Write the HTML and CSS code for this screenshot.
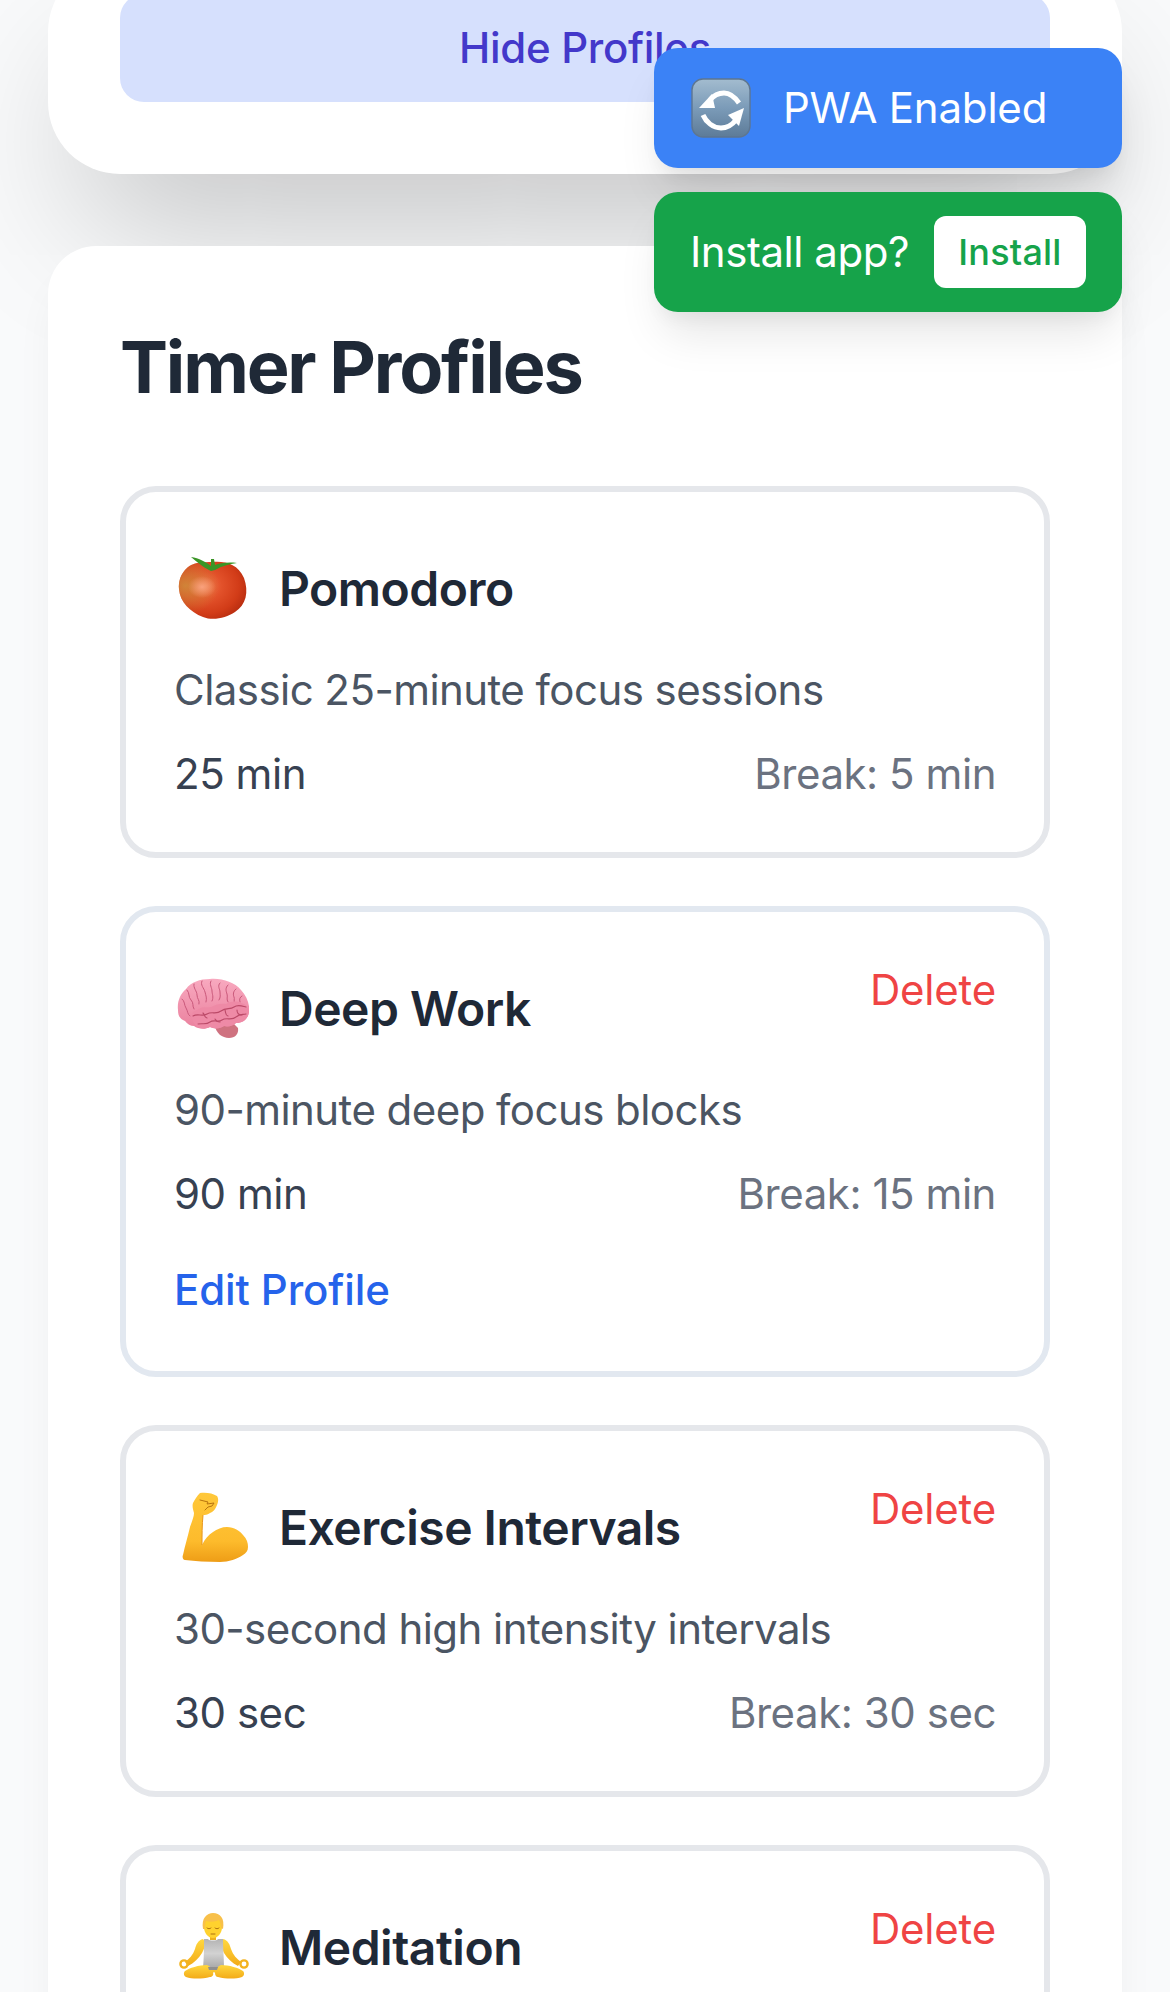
FILE: index.html
```html
<!DOCTYPE html>
<html lang="en">
<head>
<meta charset="utf-8">
<title>Timer Profiles</title>
<link rel="stylesheet" href="styles.css">
</head>
<body>
<svg class="defs" width="0" height="0" aria-hidden="true">
  <defs>
    <radialGradient id="tomatoBody" cx="0.4" cy="0.42" r="0.68">
      <stop offset="0" stop-color="#f2724a"/>
      <stop offset="0.35" stop-color="#e2512a"/>
      <stop offset="0.72" stop-color="#d23c18"/>
      <stop offset="1" stop-color="#b32a0e"/>
    </radialGradient>
    <radialGradient id="tomatoSide" cx="0.1" cy="0.42" r="0.5">
      <stop offset="0" stop-color="#cf8a3a" stop-opacity="0.9"/>
      <stop offset="1" stop-color="#cf8a3a" stop-opacity="0"/>
    </radialGradient>
    <radialGradient id="tomatoGlow" cx="0.5" cy="0.5" r="0.5">
      <stop offset="0" stop-color="#ffa888" stop-opacity="0.85"/>
      <stop offset="1" stop-color="#ffa888" stop-opacity="0"/>
    </radialGradient>
    <linearGradient id="brainBody" x1="0" y1="0" x2="0" y2="1">
      <stop offset="0" stop-color="#f8a9bf"/>
      <stop offset="1" stop-color="#ea819e"/>
    </linearGradient>
    <linearGradient id="armBody" x1="0" y1="0" x2="0" y2="1">
      <stop offset="0" stop-color="#ffc83a"/>
      <stop offset="0.7" stop-color="#fdbb2c"/>
      <stop offset="1" stop-color="#ee9d16"/>
    </linearGradient>
    <linearGradient id="skinBody" x1="0" y1="0" x2="0" y2="1">
      <stop offset="0" stop-color="#ffd83f"/>
      <stop offset="1" stop-color="#f3ab18"/>
    </linearGradient>
    <linearGradient id="vest" x1="0" y1="0" x2="0" y2="1">
      <stop offset="0" stop-color="#b4b4b4"/>
      <stop offset="0.5" stop-color="#d2d2d2"/>
      <stop offset="1" stop-color="#a8a8a8"/>
    </linearGradient>
    <linearGradient id="syncBg" x1="0" y1="0" x2="0" y2="1">
      <stop offset="0" stop-color="#a3bccf"/>
      <stop offset="0.5" stop-color="#7b9bb8"/>
      <stop offset="1" stop-color="#5d7b98"/>
    </linearGradient>
  </defs>
</svg>

<div class="page">
  <section class="panel panel-top">
    <button class="hide-btn">Hide Profiles</button>
  </section>

  <section class="panel panel-profiles">
    <h2 class="panel-title">Timer Profiles</h2>
    <div class="profile-list">

      <article class="profile">
        <header class="profile-head">
          <div class="profile-name">
            <svg class="emoji" viewBox="0 0 72 72">
              <path d="M36 10C48 9 61 12 67 26c5 14 2 27-9 34-9 6-22 9-32 5C13 60 3 50 2 37 1 24 9 13 20 11c6-1 11-1 16-1z" fill="url(#tomatoBody)"/>
              <path d="M36 10C48 9 61 12 67 26c5 14 2 27-9 34-9 6-22 9-32 5C13 60 3 50 2 37 1 24 9 13 20 11c6-1 11-1 16-1z" fill="url(#tomatoSide)"/>
              <ellipse cx="25" cy="35" rx="14" ry="11" fill="url(#tomatoGlow)"/>
              <path d="M14 5c8 1 15 5 20 9l0-7h3l1 6c5-2 13-3 22-2-8 1-15 3-22 7l-4 1-2-1C26 15 20 10 14 5z" fill="#3a9526"/>
            </svg>
            <h3>Pomodoro</h3>
          </div>
        </header>
        <p class="profile-desc">Classic 25-minute focus sessions</p>
        <div class="profile-meta"><span class="duration">25 min</span><span class="break">Break: 5 min</span></div>
      </article>

      <article class="profile profile-active">
        <header class="profile-head">
          <div class="profile-name">
            <svg class="emoji" viewBox="0 0 72 72">
              <path d="M38 54c1 7 7 12 14 12 6 0 10-4 9-10l-5-5z" fill="#cf7280"/>
              <path d="M1 38C0 30 3 22 9 17 14 10 23 7 33 7c12-1 24 3 31 11 6 6 9 15 8 22-1 7-6 11-13 11-3 3-8 4-12 3-4 3-10 3-14 1-5 3-12 2-16-1-3 0-7-2-9-5C3 47 1 44 1 38z" fill="url(#brainBody)"/>
              <g fill="none" stroke="#c9587a" stroke-width="1" stroke-linecap="round" stroke-linejoin="round">
                <path d="M5 27c3 2 2 6 4 9s1 6 4 8"/>
                <path d="M10 18c3 3 1 7 4 10s1 6 3 9"/>
                <path d="M17 12c-1 4 3 7 3 11s3 5 2 9"/>
                <path d="M25 9c-2 4 2 7 3 11s2 6 1 10"/>
                <path d="M34 9c-2 3 1 7 1 10s2 6 0 10"/>
                <path d="M43 11c-3 3 0 6 0 9s1 5-1 8"/>
                <path d="M51 13c-3 3-2 6-1 9s-1 5 1 8"/>
                <path d="M59 17c-3 2-3 6-2 8s-1 4 1 6"/>
                <path d="M65 24c-2 1-3 3-2 6"/>
              </g>
              <path d="M15 47c-2-4 1-8 5-9 5-4 10-2 14-3 5-3 11-4 15-3 5-3 11-3 15-1 5 1 8 5 8 9-1 7-6 11-13 11-3 3-8 4-12 3-4 3-10 3-14 1-4 2-11 2-14-1-2-2-3-5-4-7z" fill="#ee8aa6"/>
              <g fill="none" stroke="#bb4a68" stroke-width="1.1" stroke-linecap="round" stroke-linejoin="round">
                <path d="M16 44c5-3 9 1 14-2s9 1 14-3 9-1 13-4 8-1 12 0"/>
                <path d="M21 52c5-1 8 1 12-2s8 1 12-2 10 1 14-3 7-2 10-3"/>
                <path d="M26 41c2 2 1 4 4 5"/>
                <path d="M38 47c1 2 3 3 5 3"/>
                <path d="M48 38c1 3 0 5 3 6"/>
                <path d="M60 38c0 3 2 5 5 5"/>
              </g>
            </svg>
            <h3>Deep Work</h3>
          </div>
          <button class="link-delete">Delete</button>
        </header>
        <p class="profile-desc">90-minute deep focus blocks</p>
        <div class="profile-meta"><span class="duration">90 min</span><span class="break">Break: 15 min</span></div>
        <button class="link-edit">Edit Profile</button>
      </article>

      <article class="profile">
        <header class="profile-head">
          <div class="profile-name">
            <svg class="emoji" viewBox="0 0 72 72">
              <path d="M23 2C28 1 36 2 40 5C42 8 41 12 40 14C38 19 36 21 33 22C30 24 28 24 26 24C25 34 25 45 25 54C28 48 31 44 36 41C40 38 45 36 50 36C57 36 63 40 66 44C70 48 71 52 71 56C71 60 69 62 66 64C60 68 52 71 43 71C30 71 18 70 8 69C6 69 5 66 6 64C8 54 11 45 13 36C15 30 17 26 17 22C16 18 15 15 16 12C18 8 20 5 23 2z" fill="url(#armBody)"/>
              <path d="M23 9l8 2-1 2 7-1-2 3-4 1-3 3" fill="none" stroke="#b8740f" stroke-width="1" stroke-linejoin="round" stroke-linecap="round"/>
              <path d="M26 24c-1 10-1 21-1 30" fill="none" stroke="#e8961a" stroke-width="1"/>
            </svg>
            <h3>Exercise Intervals</h3>
          </div>
          <button class="link-delete">Delete</button>
        </header>
        <p class="profile-desc">30-second high intensity intervals</p>
        <div class="profile-meta"><span class="duration">30 sec</span><span class="break">Break: 30 sec</span></div>
      </article>

      <article class="profile">
        <header class="profile-head">
          <div class="profile-name">
            <svg class="emoji" viewBox="0 0 72 72">
              <path d="M26 28c-5 1-7 6-8 10-2 6-6 10-10 13l3 4c6-3 11-8 14-13 2-4 3-7 4-10zM46 28c5 1 7 6 8 10 2 6 6 10 10 13l-3 4c-6-3-11-8-14-13-2-4-3-7-4-10z" fill="url(#skinBody)"/>
              <circle cx="7" cy="53" r="3.6" fill="none" stroke="#f3b31f" stroke-width="2.4"/>
              <circle cx="67" cy="53" r="3.6" fill="none" stroke="#f3b31f" stroke-width="2.4"/>
              <path d="M27 28h4c1 2 9 2 10 0h5c0 10 1 18 1 29H26c1-11 1-19 1-29z" fill="url(#vest)"/>
              <path d="M33 25h6v4h-6z" fill="#eeb11e"/>
              <path d="M27 16c0-9 4-12 9-12s9 3 9 12c0 6-4 11-9 11s-9-5-9-11z" fill="#ffd22e"/>
              <path d="M26 18c-2-11 4-16 10-16 7 0 12 5 10 16l-2-1c0-4-1-6-2-8-4 2-9 2-13 1-1 2-1 5-1 8z" fill="#f8c04a"/>
              <path d="M30 17c1 1 3 1 4 0M38 17c1 1 3 1 4 0M34 23h4" stroke="#a5660c" stroke-width="0.9" fill="none" stroke-linecap="round"/>
              <path d="M30 54c-8 0-18 3-22 6-2 2-1 5 1 6 6 2 16 2 24 0 2 0 4-2 3-4 0-1 2-1 2 0 0 2 1 4 3 4 8 2 18 2 24 0 2-1 3-4 1-6-4-3-14-6-22-6-3 1-4 3-5 4h-4c-1-1-2-3-5-4z" fill="url(#skinBody)"/>
              <path d="M31 56h10l-1 3h-8z" fill="#8f8f8f"/>
            </svg>
            <h3>Meditation</h3>
          </div>
          <button class="link-delete">Delete</button>
        </header>
      </article>

    </div>
  </section>

  <aside class="toasts">
    <div class="toast toast-blue">
      <svg class="sync-icon" viewBox="0 0 60 60">
        <rect x="1" y="1" width="58" height="58" rx="11" fill="url(#syncBg)" stroke="#5e7690" stroke-width="1.4"/>
        <path d="M19 22C23 17 28 15 33 15C38 15 43 18 48 25" fill="none" stroke="#fff" stroke-width="5"/>
        <path d="M8 30L21 16L24 30z" fill="#fff"/>
        <path d="M12 37C15 44 22 50 30 50C36 50 41 47 45 42" fill="none" stroke="#fff" stroke-width="5"/>
        <path d="M53 30L37 37L48 48z" fill="#fff"/>
      </svg>
      <span>PWA Enabled</span>
    </div>
    <div class="toast toast-green">
      <span class="install-text">Install app?</span>
      <button class="install-btn">Install</button>
    </div>
  </aside>
</div>
</body>
</html>
```

FILE: styles.css
```css
* { box-sizing: border-box; }

html, body {
  margin: 0;
  height: 1992px;
  overflow: hidden;
}

body {
  background: #f9fafb;
  font-family: Inter, "Liberation Sans", sans-serif;
  color: #1f2937;
}

.defs { position: absolute; }

.page {
  position: relative;
  height: 1992px;
  overflow: hidden;
  padding: 0 48px;
}

.panel {
  background: #fff;
  padding: 0 72px;
}

.panel-top {
  margin-top: -40px;
  padding-top: 34px;
  padding-bottom: 72px;
  border-radius: 72px;
  box-shadow: 0 75px 150px -36px rgba(0, 0, 0, 0.25);
}

.hide-btn {
  display: block;
  width: 100%;
  height: 108px;
  border: 0;
  border-radius: 24px;
  background: #d6e0fd;
  color: #4338ca;
  font: 500 42px/60px Inter, sans-serif;
  letter-spacing: -0.3px;
}

.panel-profiles {
  position: relative;
  margin-top: 72px;
  padding-top: 72px;
  border-radius: 48px;
  box-shadow: 0 30px 45px -9px rgba(0, 0, 0, 0.06);
}

.panel-title {
  margin: 0 0 72px;
  padding-top: 1px;
  height: 96px;
  font-size: 72px;
  line-height: 96px;
  font-weight: 700;
  letter-spacing: -2.2px;
  color: #1f2937;
}

.profile-list {
  display: flex;
  flex-direction: column;
  gap: 48px;
}

.profile {
  border: 6px solid #e5e7eb;
  border-radius: 36px;
  padding: 48px;
  background: #fff;
}

.profile-active {
  border-color: #e2e8f0;
}

.profile-head {
  display: flex;
  justify-content: space-between;
  align-items: flex-start;
  margin-bottom: 24px;
}

.profile-name {
  display: flex;
  align-items: center;
  height: 96px;
}

.profile-name h3 {
  margin: 2px 0 0;
  font-size: 48px;
  line-height: 72px;
  font-weight: 600;
  letter-spacing: -0.5px;
  color: #1f2937;
}

.emoji {
  width: 72px;
  height: 72px;
  margin-left: 3px;
  margin-right: 30px;
  flex: none;
}

.profile-desc {
  margin: 0 0 24px;
  font-size: 42px;
  line-height: 60px;
  letter-spacing: -0.55px;
  color: #4b5563;
}

.profile-meta {
  display: flex;
  justify-content: space-between;
  font-size: 42px;
  line-height: 60px;
  letter-spacing: -0.45px;
}

.duration { color: #374151; }
.break { color: #6b7280; }

.link-delete,
.link-edit {
  border: 0;
  background: none;
  padding: 0;
  font: 400 42px/60px Inter, sans-serif;
  letter-spacing: -0.2px;
}

.link-delete { color: #ef4444; }

.link-edit {
  display: block;
  margin-top: 36px;
  margin-bottom: 3px;
  color: #2563eb;
  font-weight: 500;
  letter-spacing: -0.1px;
}

.toasts {
  position: absolute;
  top: 48px;
  right: 48px;
  width: 468px;
  display: flex;
  flex-direction: column;
  gap: 24px;
}

.toast {
  height: 120px;
  padding: 0 36px;
  border-radius: 24px;
  display: flex;
  align-items: center;
  color: #fff;
  font-size: 42px;
  line-height: 60px;
  letter-spacing: -0.2px;
  box-shadow: 0 30px 45px -9px rgba(0, 0, 0, 0.1), 0 12px 18px -6px rgba(0, 0, 0, 0.05);
}

.toast-blue { background: #3b82f6; }
.toast-green { background: #16a34a; justify-content: space-between; }

.install-text { letter-spacing: -0.45px; }

.sync-icon {
  width: 60px;
  height: 60px;
  margin-left: 1px;
  margin-right: 32px;
  flex: none;
}

.install-btn {
  width: 152px;
  height: 72px;
  border: 0;
  border-radius: 12px;
  background: #fff;
  color: #16a34a;
  font: 500 36px/48px Inter, sans-serif;
  letter-spacing: 0.2px;
  padding: 0;
}
```
